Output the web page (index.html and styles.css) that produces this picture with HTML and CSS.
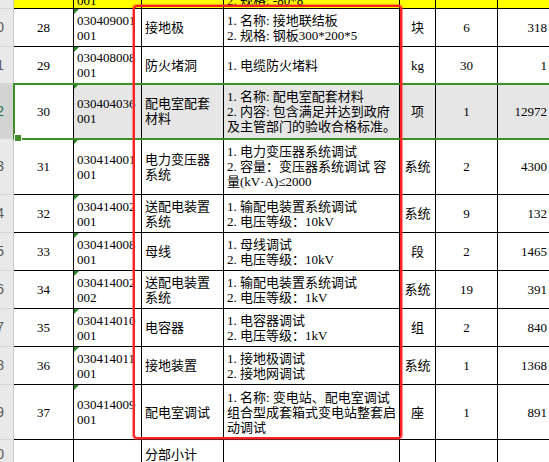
FILE: index.html
```html
<!DOCTYPE html>
<html lang="zh-CN">
<head>
<meta charset="utf-8">
<title>分部分项工程量清单</title>
<link rel="stylesheet" href="styles.css">
</head>
<body>
<div class="sheet">
  <div class="rh top"></div>
  <div class="c y"></div>
  <div class="c y lft num">001</div>
  <div class="c y"></div>
  <div class="c y lft">2. 规格: -80*8</div>
  <div class="c y"></div>
  <div class="c y"></div>
  <div class="c y"></div>

  <div class="rh">30</div>
  <div class="c ctr">28</div>
  <div class="c lft code"><div>030409001<br>001</div></div>
  <div class="c lft">接地极</div>
  <div class="c lft"><div>1. 名称: 接地联结板<br>2. 规格: 钢板300*200*5</div></div>
  <div class="c ctr">块</div>
  <div class="c ctr">6</div>
  <div class="c rgt">318</div>

  <div class="rh">31</div>
  <div class="c ctr">29</div>
  <div class="c lft code"><div>030408008<br>001</div></div>
  <div class="c lft">防火堵洞</div>
  <div class="c lft">1. 电缆防火堵料</div>
  <div class="c ctr">kg</div>
  <div class="c ctr">30</div>
  <div class="c rgt">1</div>

  <div class="rh sel">32</div>
  <div class="c ctr">30</div>
  <div class="c lft code hl"><div>030404036<br>001</div></div>
  <div class="c lft hl"><div>配电室配套<br>材料</div></div>
  <div class="c lft hl"><div>1. 名称: 配电室配套材料<br>2. 内容: 包含满足并达到政府<br>及主管部门的验收合格标准。</div></div>
  <div class="c ctr hl">项</div>
  <div class="c ctr hl">1</div>
  <div class="c rgt hl">12972</div>

  <div class="rh">33</div>
  <div class="c ctr">31</div>
  <div class="c lft code"><div>030414001<br>001</div></div>
  <div class="c lft"><div>电力变压器<br>系统</div></div>
  <div class="c lft"><div>1. 电力变压器系统调试<br>2. 容量：变压器系统调试 容<br>量(kV·A)≤2000</div></div>
  <div class="c ctr">系统</div>
  <div class="c ctr">2</div>
  <div class="c rgt">4300</div>

  <div class="rh">34</div>
  <div class="c ctr">32</div>
  <div class="c lft code"><div>030414002<br>001</div></div>
  <div class="c lft"><div>送配电装置<br>系统</div></div>
  <div class="c lft"><div>1. 输配电装置系统调试<br>2. 电压等级：10kV</div></div>
  <div class="c ctr">系统</div>
  <div class="c ctr">9</div>
  <div class="c rgt">132</div>

  <div class="rh">35</div>
  <div class="c ctr">33</div>
  <div class="c lft code"><div>030414008<br>001</div></div>
  <div class="c lft">母线</div>
  <div class="c lft"><div>1. 母线调试<br>2. 电压等级：10kV</div></div>
  <div class="c ctr">段</div>
  <div class="c ctr">2</div>
  <div class="c rgt">1465</div>

  <div class="rh">36</div>
  <div class="c ctr">34</div>
  <div class="c lft code"><div>030414002<br>002</div></div>
  <div class="c lft"><div>送配电装置<br>系统</div></div>
  <div class="c lft"><div>1. 输配电装置系统调试<br>2. 电压等级：1kV</div></div>
  <div class="c ctr">系统</div>
  <div class="c ctr">19</div>
  <div class="c rgt">391</div>

  <div class="rh">37</div>
  <div class="c ctr">35</div>
  <div class="c lft code"><div>030414010<br>001</div></div>
  <div class="c lft">电容器</div>
  <div class="c lft"><div>1. 电容器调试<br>2. 电压等级：1kV</div></div>
  <div class="c ctr">组</div>
  <div class="c ctr">2</div>
  <div class="c rgt">840</div>

  <div class="rh">38</div>
  <div class="c ctr">36</div>
  <div class="c lft code"><div>030414011<br>001</div></div>
  <div class="c lft">接地装置</div>
  <div class="c lft"><div>1. 接地极调试<br>2. 接地网调试</div></div>
  <div class="c ctr">系统</div>
  <div class="c ctr">1</div>
  <div class="c rgt">1368</div>

  <div class="rh">39</div>
  <div class="c ctr">37</div>
  <div class="c lft code"><div>030414009<br>001</div></div>
  <div class="c lft">配电室调试</div>
  <div class="c lft"><div>1. 名称: 变电站、配电室调试<br>组合型成套箱式变电站整套启<br>动调试</div></div>
  <div class="c ctr">座</div>
  <div class="c ctr">1</div>
  <div class="c rgt">891</div>

  <div class="rh">40</div>
  <div class="c"></div>
  <div class="c"></div>
  <div class="c lft">分部小计</div>
  <div class="c"></div>
  <div class="c"></div>
  <div class="c"></div>
  <div class="c"></div>

  <div class="selection"></div>
  <div class="handle"></div>
  <div class="mark"></div>
</div>
</body>
</html>
```
FILE: styles.css
```css
html, body {
  margin: 0;
  padding: 0;
  background: #fff;
}
body {
  width: 549px;
  height: 462px;
  overflow: hidden;
}
.sheet {
  position: relative;
  display: grid;
  grid-template-columns: 14px 60px 68px 82px 176px 36px 62px 52px;
  grid-template-rows: 9px 38px 37px 55px 56px 38px 38px 38px 38px 38px 55px 30px;
  font-family: "Liberation Serif", "Noto Sans CJK SC", serif;
  font-size: 13px;
  line-height: 15px;
  color: #000;
}
.c {
  box-sizing: border-box;
  border-right: 1px solid #000;
  border-bottom: 1px solid #000;
  display: flex;
  align-items: center;
  overflow: hidden;
  white-space: nowrap;
  position: relative;
  background: #fff;
}
.ctr { justify-content: center; }
.lft { justify-content: flex-start; padding-left: 3px; }
.rgt { justify-content: flex-end; padding-right: 2px; }
.y {
  background: #ffff00;
  align-items: flex-end;
}
.hl { background: #e6e6e6; }
.code::before {
  content: "";
  position: absolute;
  top: 0;
  left: 0;
  border-top: 5px solid #1f8a1f;
  border-right: 5px solid transparent;
}
.rh {
  box-sizing: border-box;
  background: #e9e9e9;
  border-right: 1px solid #c9c9c9;
  border-bottom: 1px solid #d6d6d6;
  display: flex;
  align-items: center;
  justify-content: flex-end;
  padding-right: 9px;
  overflow: hidden;
  font-family: "Liberation Sans", sans-serif;
  font-size: 14px;
  color: #595959;
}
.rh.sel {
  background: #d3d3d3;
  color: #217346;
}
.selection {
  position: absolute;
  left: 13px;
  top: 83px;
  width: 560px;
  height: 57px;
  box-sizing: border-box;
  border: 2px solid #3f8c2a;
  pointer-events: none;
}
.handle {
  position: absolute;
  left: 15px;
  top: 135px;
  width: 6px;
  height: 6px;
  background: #3f8c2a;
  box-shadow: 0 0 0 1px #fff;
}
.mark {
  position: absolute;
  left: 133px;
  top: 5px;
  width: 269px;
  height: 434px;
  box-sizing: border-box;
  border: 2px solid #ff2222;
  border-radius: 4px;
  box-shadow: 0 0 1px 0.5px rgba(255, 60, 60, 0.55);
  pointer-events: none;
}
```
